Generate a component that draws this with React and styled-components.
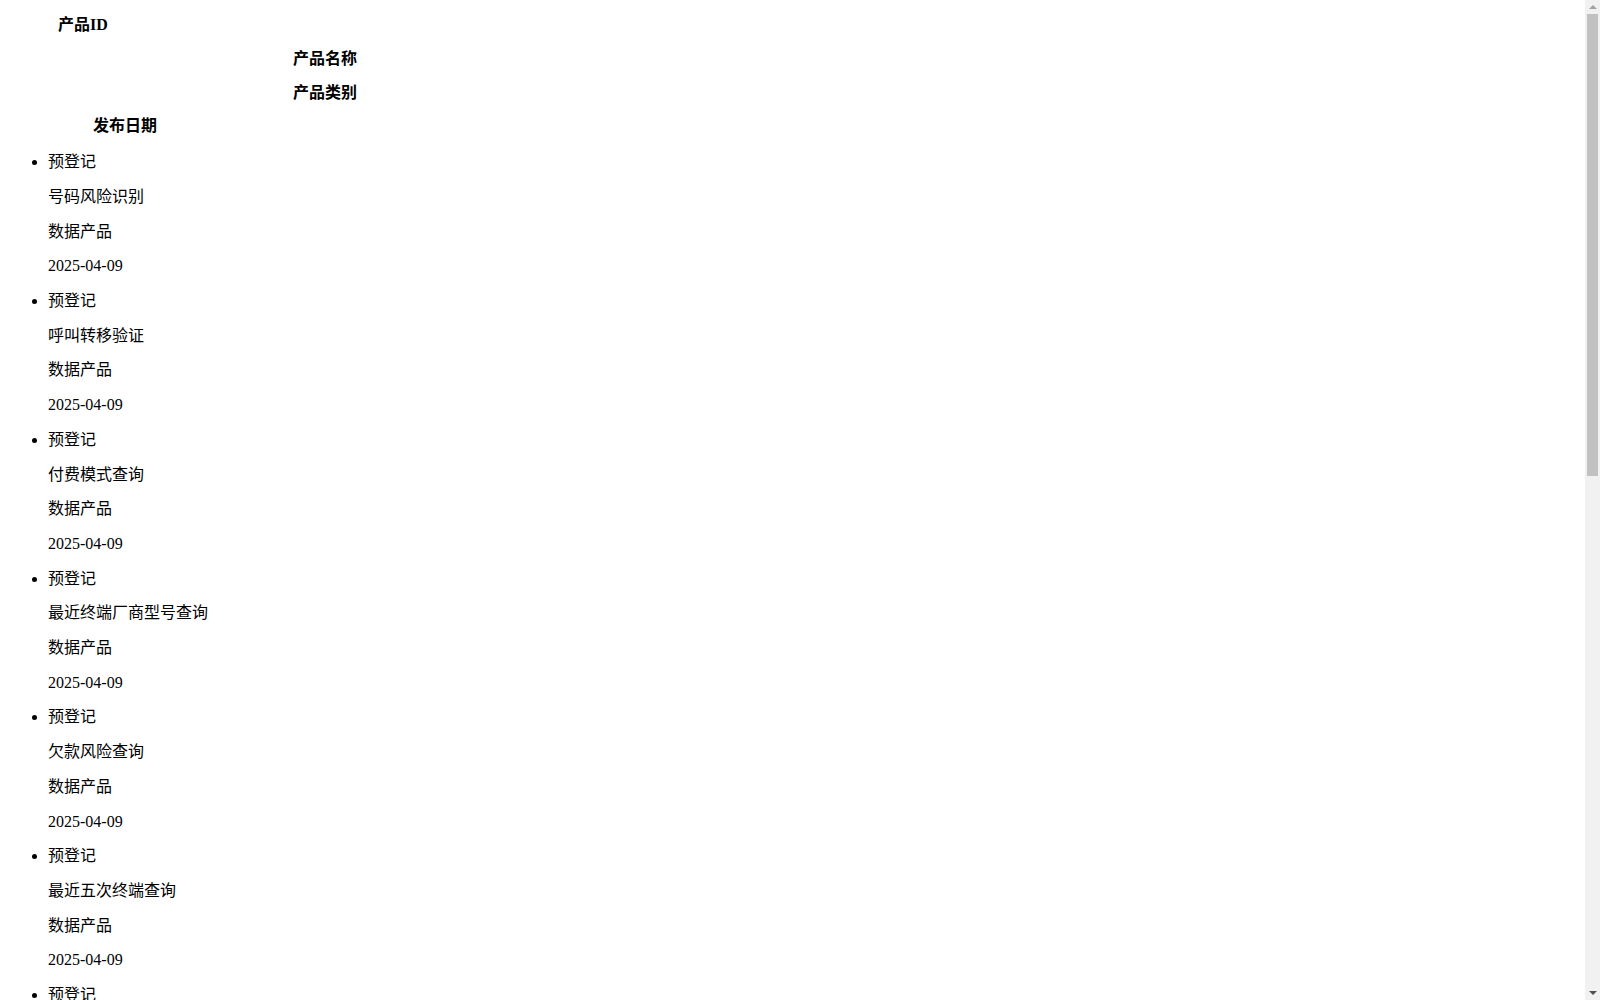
import styled, { createGlobalStyle } from 'styled-components';

const GlobalStyle = createGlobalStyle`
  body {
    margin: 0 8px 8px;
    background: #ffffff;
    color: #000000;
    font-family: "Liberation Serif", "Noto Sans CJK SC", serif;
    font-size: 16px;
  }
`;

const Header = styled.div`
  display: block;
`;

const HeaderCell = styled.p`
  margin: 16px 0;
  padding-left: ${(p) => p.$indent}px;
  font-weight: bold;
  line-height: 17.8px;
`;

const List = styled.ul`
  margin: 18px 0 16px;
  padding-left: 40px;
  list-style: disc;
`;

const Item = styled.li`
  line-height: 18.7px;
`;

const Field = styled.p`
  margin: 16px 0;
`;

/* fake browser scrollbar drawn over the right edge */
const Scrollbar = styled.div`
  position: fixed;
  top: 0;
  right: 0;
  width: 15px;
  height: 100vh;
  background: #f1f1f1;
  display: flex;
  flex-direction: column;
`;

const ArrowButton = styled.div`
  height: 14px;
  flex-shrink: 0;
  display: flex;
  align-items: center;
  justify-content: center;
`;

const Track = styled.div`
  flex: 1;
  padding: 0 2px;
`;

const Thumb = styled.div`
  background: #c1c1c1;
  height: ${(p) => p.$size}px;
`;

const columns = [
  { label: '产品ID', indent: 50 },
  { label: '产品名称', indent: 285 },
  { label: '产品类别', indent: 285 },
  { label: '发布日期', indent: 85 },
];

const names = [
  '号码风险识别',
  '呼叫转移验证',
  '付费模式查询',
  '最近终端厂商型号查询',
  '欠款风险查询',
  '最近五次终端查询',
  '在网时长查询',
  '在网状态查询',
  '三要素核验',
  '二要素核验',
  '实名认证查询',
  '号码归属地查询',
  '携号转网查询',
  '月消费档次查询',
];

const products = names.map((name) => ({
  id: '预登记',
  name,
  category: '数据产品',
  date: '2025-04-09',
}));

export default function App() {
  return (
    <>
      <GlobalStyle />
      <Header>
        {columns.map((c) => (
          <HeaderCell key={c.label} $indent={c.indent}>
            {c.label}
          </HeaderCell>
        ))}
      </Header>
      <List>
        {products.map((p) => (
          <Item key={p.name}>
            <Field>{p.id}</Field>
            <Field>{p.name}</Field>
            <Field>{p.category}</Field>
            <Field>{p.date}</Field>
          </Item>
        ))}
      </List>
      <Scrollbar>
        <ArrowButton>
          <svg width="8" height="4" viewBox="0 0 8 4">
            <polygon points="4,0 8,4 0,4" fill="#a3a3a3" />
          </svg>
        </ArrowButton>
        <Track>
          <Thumb $size={462} />
        </Track>
        <ArrowButton>
          <svg width="8" height="4" viewBox="0 0 8 4">
            <polygon points="0,0 8,0 4,4" fill="#505050" />
          </svg>
        </ArrowButton>
      </Scrollbar>
    </>
  );
}
